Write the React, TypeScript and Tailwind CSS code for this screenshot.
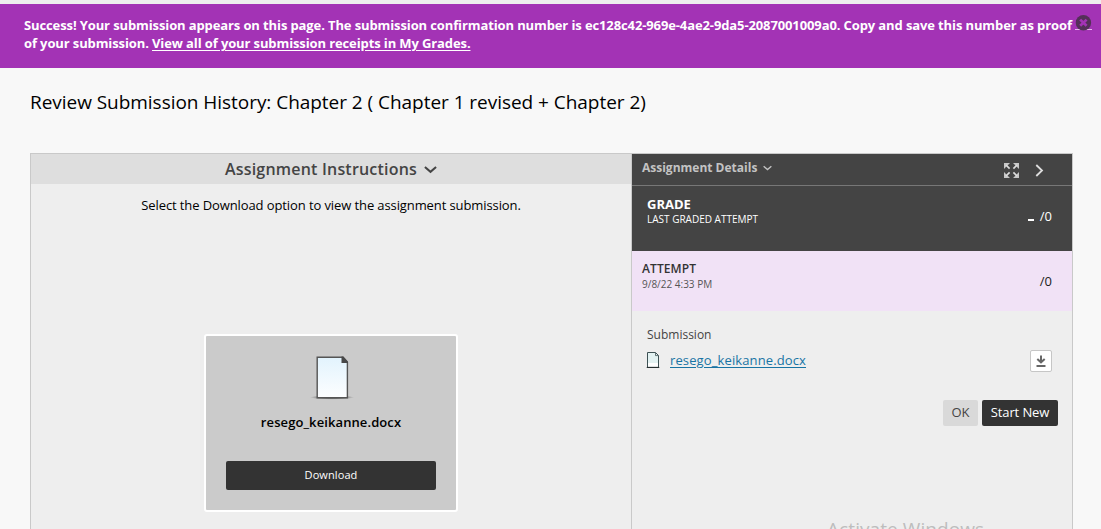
function Chevron({ className }: { className: string }) {
  return (
    <svg className={className} viewBox="0 0 14 9" fill="none" stroke="currentColor" strokeWidth="2.2">
      <path d="M1 1.8 L7 7 L13 1.8" />
    </svg>
  );
}

function LargeDocument() {
  return (
    <svg className="h-[46px] w-[46px]" viewBox="0 0 46 46">
      <defs>
        <linearGradient id="page" x1="0" y1="0" x2="0" y2="1">
          <stop offset="0" stopColor="#e2f3fd" />
          <stop offset="1" stopColor="#fdfeff" />
        </linearGradient>
        <radialGradient id="shade">
          <stop offset="0.5" stopColor="#777" />
          <stop offset="1" stopColor="#777" stopOpacity="0" />
        </radialGradient>
      </defs>
      <ellipse cx="23" cy="42.4" rx="22" ry="2.2" fill="url(#shade)" />
      <path d="M8.2 2.2 H34 L38.4 7 V42.8 H8.2 Z" fill="url(#page)" stroke="#555" strokeWidth="1.4" />
      <path d="M32.5 1.5 H34.3 L39 6.7 V8 H32.5 Z" fill="#484848" />
    </svg>
  );
}

function SmallDocument() {
  return (
    <svg className="h-4 w-[14px]" viewBox="0 0 14 16">
      <path d="M0 15.5 H14" stroke="#999" strokeOpacity=".6" />
      <path d="M1.5 .5 H9.5 L12.5 3.5 V15.3 H1.5 Z" fill="#e3f2f2" stroke="#3d5154" />
      <path d="M2 11 H12 V14.8 H2 Z" fill="#fff" />
      <path d="M9.5 .8 V3.6 H12.4" fill="none" stroke="#3d5154" strokeWidth=".8" />
      <path d="M1 15.4 H13" stroke="#202829" />
    </svg>
  );
}

function Expand() {
  return (
    <svg className="h-[15px] w-[15px]" viewBox="0 0 15 15" fill="#dedede" stroke="#dedede">
      <path stroke="none" d="M0 0H6L4.3 1.7L1.7 4.3L0 6ZM15 0V6L9 0ZM0 15V9L6 15ZM15 15H9L15 9Z" fillOpacity=".85" />
      <path strokeWidth="1.7" d="M2 2L5.6 5.6M13 2L9.4 5.6M2 13L5.6 9.4M13 13L9.4 9.4" />
    </svg>
  );
}

function Banner() {
  return (
    <div className="relative h-16 bg-[#a333b5] pt-3 pl-6 text-[13px] leading-[18px] font-bold tracking-[-0.113px] whitespace-nowrap text-white">
      <p>
        Success! Your submission appears on this page. The submission confirmation number is
        ec128c42-969e-4ae2-9da5-2087001009a0. Copy and save this number as proof
      </p>
      <p>
        of your submission. <a className="underline underline-offset-2">View all of your submission receipts in My Grades.</a>
      </p>
      <svg className="absolute top-[11px] right-[9px] h-4 w-[17px]" viewBox="0 0 17 16">
        <path d="M0 14.5H17" stroke="#e5b8ec" />
        <circle cx="8.4" cy="7.7" r="7.7" fill="#543058" />
        <path d="M5.2 4.6L11.6 10.8M11.6 4.6L5.2 10.8" stroke="#a333b5" strokeWidth="2.7" />
      </svg>
    </div>
  );
}

function Instructions() {
  return (
    <section className="flex w-[600px] shrink-0 flex-col items-center">
      <h2 className="flex h-[30px] w-full items-center justify-center gap-[7px] bg-[#dedede] text-base font-semibold tracking-[0.2px] text-[#444]">
        Assignment Instructions
        <Chevron className="h-[9px] w-[13px]" />
      </h2>
      <p className="mt-3 text-[13px] leading-[18px] tracking-[-0.1px] text-black">Select the Download option to view the assignment submission.</p>
      <div className="mt-[120px] flex h-[178px] w-[254px] flex-col items-center rounded-[3px] border-2 border-white bg-[#cbcbcb]">
        <div className="mt-[19px] ml-[1px] h-[46px]"><LargeDocument /></div>
        <p className="mt-[12px] text-[13px] leading-[18px] font-semibold tracking-[0.1px] text-black">resego_keikanne.docx</p>
        <button className="mt-[30px] h-[29px] w-[210px] rounded-[2px] bg-[#333] text-[11px] tracking-[0.1px] text-white">Download</button>
      </div>
    </section>
  );
}

function Details() {
  return (
    <section className="flex min-w-0 grow flex-col border-l border-[#c9c9c9]">
      <header className="flex h-8 items-start border-b border-[#777] bg-[#444] pl-[10px] text-[#c3c3c3]">
        <h3 className="mt-[5px] text-xs leading-[18px] font-bold">Assignment Details</h3>
        <Chevron className="mt-[11px] ml-[6px] h-[6px] w-[9px]" />
        <span className="mt-[9px] ml-auto"><Expand /></span>
        <svg className="mt-[10px] mr-[28px] ml-[16px] h-[13px] w-[9px]" viewBox="0 0 9 13" fill="none" stroke="#dedede" strokeWidth="1.8">
          <path d="M1.3 1L7 6.5L1.3 12" />
        </svg>
      </header>
      <div className="flex h-[65px] justify-between bg-[#444] pr-5 pl-[15px] text-white">
        <div className="mt-[9px]">
          <h4 className="text-[13px] leading-[18px] font-bold">GRADE</h4>
          <p className="-mt-px text-[10px] leading-[14px]">LAST GRADED ATTEMPT</p>
        </div>
        <div className="mt-[21px] flex h-[18px] items-center gap-[6px] text-[13px] leading-[18px]">
          <span className="mt-[7px] h-[2px] w-[6px] bg-white" />
          <span>/0</span>
        </div>
      </div>
      <div className="flex h-[60px] justify-between bg-[#f1e2f6] pr-5 pl-[10px]">
        <div className="mt-[9px]">
          <h4 className="text-xs leading-[18px] font-semibold tracking-[0.1px] text-[#333]">ATTEMPT</h4>
          <p className="-mt-px text-[10px] leading-[14px] text-[#555]">9/8/22 4:33 PM</p>
        </div>
        <span className="mt-[21px] text-[13px] leading-[18px] text-[#222]">/0</span>
      </div>
      <div className="flex grow flex-col">
        <h4 className="mt-[15px] ml-[15px] text-xs leading-[18px] text-[#444]">Submission</h4>
        <div className="mt-[6px] flex h-[22px] items-center pr-5 pl-[14px]">
          <span className="-mt-[2px]"><SmallDocument /></span>
          <a className="-mt-[2px] ml-[10px] text-[13px] leading-[18px] tracking-[0.12px] text-[#1874a4] underline underline-offset-2">resego_keikanne.docx</a>
          <button className="ml-auto flex h-[22px] w-[22px] items-center justify-center rounded-[2px] border border-[#c6c6c6] bg-white">
            <svg className="h-3 w-[10px]" viewBox="0 0 10 12" fill="none" stroke="#666">
              <path strokeWidth="2" d="M5 .5V6.5M1.3 4L5 7.3L8.7 4" />
              <path strokeWidth="2" d="M.5 11H9.5" />
            </svg>
          </button>
        </div>
        <div className="mt-7 flex justify-end gap-1 pr-[14px] text-[13px]">
          <button className="h-[26px] w-[35px] rounded-[2px] bg-[#d9d9d9] text-[#444]">OK</button>
          <button className="h-[26px] w-[76px] rounded-[2px] bg-[#333] tracking-[-0.1px] whitespace-nowrap text-white">Start New</button>
        </div>
        <p className="mt-[87px] ml-[195px] text-[19px] leading-[32px] tracking-[0.08px] whitespace-nowrap text-[#bdbdbd]">Activate Windows</p>
      </div>
    </section>
  );
}

export default function App() {
  return (
    <div className="flex h-[529px] w-[1101px] flex-col overflow-hidden bg-[#f8f8f8] font-['Open_Sans',sans-serif]">
      <div className="h-1 shrink-0 bg-[#eeeeee]" />
      <div className="shrink-0"><Banner /></div>
      <h1 className="mt-[22px] ml-[30px] h-[24px] shrink-0 text-[19px] leading-[24px] tracking-[-0.04px] whitespace-nowrap text-black">
        Review Submission History: Chapter 2 ( Chapter 1 revised + Chapter 2)
      </h1>
      <main className="mt-[39px] ml-[30px] flex h-[420px] w-[1043px] shrink-0 border border-[#c9c9c9] bg-[#eeeeee]">
        <Instructions />
        <Details />
      </main>
    </div>
  );
}
